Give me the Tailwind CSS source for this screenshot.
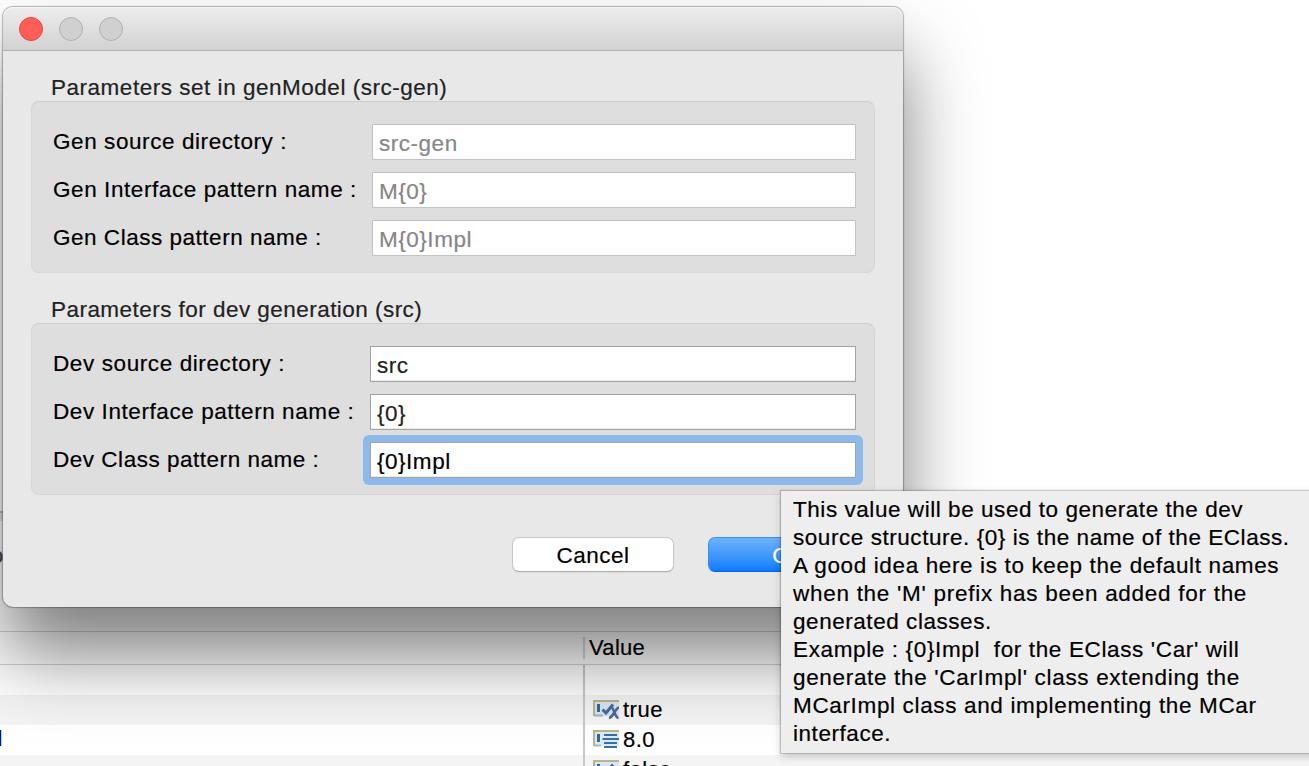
<!DOCTYPE html>
<html lang="en">
<head>
<meta charset="utf-8">
<title>Generation parameters</title>
<script src="https://cdn.jsdelivr.net/npm/@tailwindcss/browser@4"></script>
</head>
<body class="relative h-[766px] w-[1309px] overflow-hidden bg-white font-['Liberation_Sans',Arial,sans-serif] text-[22px] leading-[28px] tracking-[0.5px] text-black [-webkit-text-stroke:0.2px]">

<!-- Properties view behind the dialog -->
<main class="flex h-[766px] flex-col overflow-hidden">
  <div class="h-[511px] shrink-0"></div>
  <div class="h-[10px] w-[600px] shrink-0 border-t-2 border-[#bdbdbd] bg-[#e4e4e4]"></div>
  <div class="flex h-[110px] shrink-0 items-start pt-[21px] text-[#444]"><span class="-ml-[9px]">o</span></div>
  <header class="flex h-[34px] shrink-0 items-center border-y border-[#d2d2d2] pl-[583px] tracking-[0.3px]">
    <span class="mr-1 h-[22px] w-[2px] bg-[#d8d8d8]"></span><span>Value</span>
  </header>
  <div class="flex h-[30px] shrink-0"><span class="w-[583px]"></span><span class="w-[2px] bg-[#c8c8c8]"></span></div>
  <div class="flex h-[30px] shrink-0 bg-[#f4f4f4]">
    <span class="w-[583px]"></span><span class="w-[2px] bg-[#c8c8c8]"></span>
    <div class="flex items-center pl-2">
      <svg class="mr-[3px] h-[22px] w-[27px]" viewBox="0 0 27 22"><use href="#boolIcon"/></svg><span>true</span>
    </div>
  </div>
  <div class="flex h-[30px] shrink-0">
    <span class="w-[583px] text-[#00004d]"><span class="-ml-[2.500px]">l</span></span><span class="w-[2px] bg-[#c8c8c8]"></span>
    <div class="flex items-center pl-2">
      <svg class="mr-[3px] h-[22px] w-[27px]" viewBox="0 0 27 22">
        <rect x="1" y="2" width="25" height="15" fill="#dcebf5"/>
        <path d="M1 17V2H26" fill="none" stroke="#b9b48c" stroke-width="2"/>
        <path d="M1 16.500H8" stroke="#a9b8bd" stroke-width="2"/>
        <path d="M5.500 5V13" stroke="#2f6a9c" stroke-width="3"/>
        <path d="M11 6H24M9.500 10H26M11 14H24M11 18H24" stroke="#38709f" stroke-width="2"/>
      </svg><span>8.0</span>
    </div>
  </div>
  <div class="flex h-[11px] shrink-0 overflow-hidden bg-[#f4f4f4]">
    <span class="w-[583px]"></span><span class="w-[2px] bg-[#c8c8c8]"></span>
    <div class="flex h-[30px] items-center pl-2">
      <svg class="mr-[3px] h-[22px] w-[27px]" viewBox="0 0 27 22"><use href="#boolIcon"/></svg><span>false</span>
    </div>
  </div>
</main>

<svg class="absolute h-0 w-0">
  <symbol id="boolIcon" viewBox="0 0 27 22">
    <rect x="1" y="2" width="25" height="15" fill="#d7e6f2"/>
    <path d="M1 17V2H26" fill="none" stroke="#b9b48c" stroke-width="2"/>
    <path d="M1 16.500H10" stroke="#a3afc0" stroke-width="2"/>
    <path d="M5.500 5V13" stroke="#2f6a9c" stroke-width="3"/>
    <path d="M9.500 10.500L13 14L20 5.500" fill="none" stroke="#48699b" stroke-width="3"/>
    <path d="M18.500 8.500C21 8.500 21.500 18.500 25.500 19M26 8.500C22.500 9 20 18.500 16 19" fill="none" stroke="#48699b" stroke-width="2.600"/>
  </symbol>
</svg>

<!-- Dialog window -->
<section class="absolute left-[3px] top-[7px] flex h-[600px] w-[900px] flex-col rounded-[10px] bg-[#e8e8e8] text-[22.5px] tracking-[0.52px] shadow-[0_0_1px_1px_rgba(0,0,0,0.28),0_48px_76px_rgba(0,0,0,0.5)]">
  <div class="flex h-[44px] shrink-0 items-center gap-4 rounded-t-[10px] border-b border-[#b1b1b1] bg-linear-to-b from-[#ededed] to-[#d2d2d2] pl-4 shadow-[inset_0_1px_0_#f6f6f6]">
    <span class="size-6 rounded-full border border-[#e2463f] bg-[#ff5f57]"></span>
    <span class="size-6 rounded-full border border-[#b0b0b0] bg-[#d0d0d0]"></span>
    <span class="size-6 rounded-full border border-[#b0b0b0] bg-[#d0d0d0]"></span>
  </div>
  <div class="flex flex-col px-7 pt-[22px]">
    <h2 class="h-7 pl-5 pt-px text-[#222]"><span>Parameters set in genModel (src-gen)</span></h2>
    <div class="flex h-[172px] flex-col gap-3 rounded-lg border border-[#d6d6d6] border-t-[#cdcdcd] bg-[#dedede] pl-[21px] pr-[18px] pt-[22px]">
      <div class="flex h-9 justify-between"><label class="pt-1 tracking-[0.58px]">Gen source directory :</label><div class="w-[484px] border border-[#c3c3c3] bg-white pl-[6px] pt-[5px] text-[#868686]">src-gen</div></div>
      <div class="flex h-9 justify-between"><label class="pt-1 tracking-[0.58px]">Gen Interface pattern name :</label><div class="w-[484px] border border-[#c3c3c3] bg-white pl-[6px] pt-[5px] text-[#868686]">M{0}</div></div>
      <div class="flex h-9 justify-between"><label class="pt-1">Gen Class pattern name :</label><div class="w-[484px] border border-[#c3c3c3] bg-white pl-[6px] pt-[5px] text-[#868686]">M{0}Impl</div></div>
    </div>
    <h2 class="mt-[22px] h-7 pl-5 pt-px tracking-[0.46px] text-[#222]"><span>Parameters for dev generation (src)</span></h2>
    <div class="flex h-[172px] flex-col gap-3 rounded-lg border border-[#d6d6d6] border-t-[#cdcdcd] bg-[#dedede] pl-[21px] pr-[18px] pt-[22px]">
      <div class="flex h-9 justify-between"><label class="pt-1 tracking-[0.6px]">Dev source directory :</label><div class="w-[486px] border border-[#a3a3a3] bg-white pl-[6px] pt-[5px] text-[#222] shadow-[inset_0_-1px_0_#ececec]">src</div></div>
      <div class="flex h-9 justify-between"><label class="pt-1 tracking-[0.58px]">Dev Interface pattern name :</label><div class="w-[486px] border border-[#a3a3a3] bg-white pl-[6px] pt-[5px] text-[#222] shadow-[inset_0_-1px_0_#ececec]">{0}</div></div>
      <div class="flex h-9 justify-between"><label class="pt-1">Dev Class pattern name :</label>
        <div class="-m-[7px] h-[50px] rounded-[6px] bg-[#8ebaeb] p-[7px]"><div class="h-9 w-[486px] border border-[#a3a3a3] bg-white pl-[6px] pt-[5px] shadow-[inset_0_-1px_0_#ececec]">{0}Impl</div></div></div>
    </div>
    <div class="mt-[42px] flex justify-end gap-[34px] pr-[5px]">
      <div class="flex h-[35px] w-[162px] items-center justify-center rounded-[7px] border border-[#c6c6c6] border-b-[#acacac] bg-white pt-[2px] shadow-[0_1px_1px_rgba(0,0,0,0.06)]">Cancel</div>
      <div class="flex h-[35px] w-[162px] items-center justify-center rounded-[7px] border border-[#3a8ff5] border-b-[#0a5cf0] bg-linear-to-b from-[#6cb3fa] to-[#067bff] pt-[2px] text-white">OK</div>
    </div>
  </div>
</section>

<!-- Field tooltip -->
<aside class="absolute left-[781px] top-[491px] h-[262px] w-[540px] whitespace-nowrap bg-[#eeeeee] pl-3 pt-[5px] text-[22.5px] tracking-[0.55px] shadow-[0_0_1px_1px_rgba(0,0,0,0.18),0_3px_8px_rgba(0,0,0,0.22)]">
  <p>This value will be used to generate the dev</p>
  <p>source structure. {0} is the name of the EClass.</p>
  <p class="tracking-[0.63px]">A good idea here is to keep the default names</p>
  <p class="tracking-[0.72px]">when the 'M' prefix has been added for the</p>
  <p>generated classes.</p>
  <p class="tracking-[0.63px]">Example : {0}Impl&nbsp; for the EClass 'Car' will</p>
  <p class="tracking-[0.67px]">generate the 'CarImpl' class extending the</p>
  <p class="tracking-[0.65px]">MCarImpl class and implementing the MCar</p>
  <p>interface.</p>
</aside>
</body>
</html>
